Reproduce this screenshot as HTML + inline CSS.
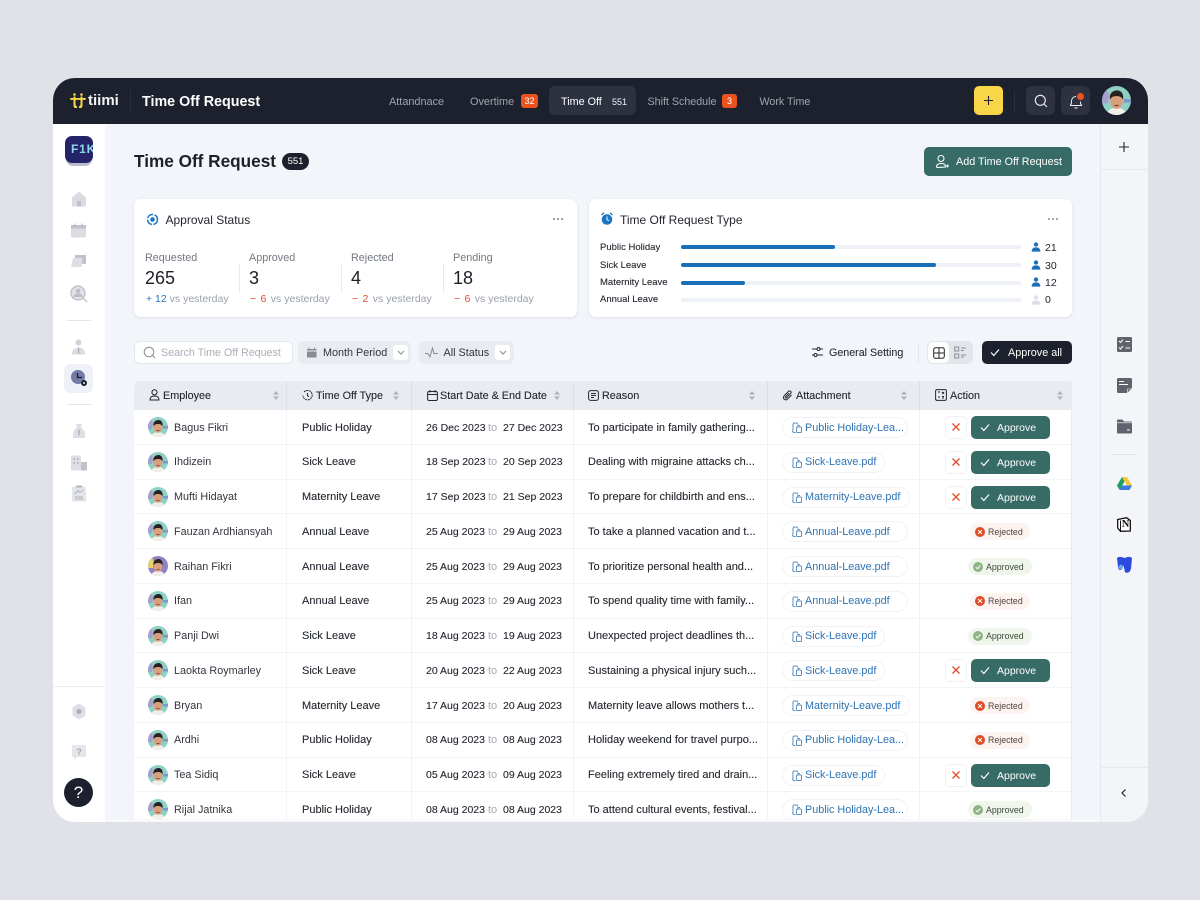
<!DOCTYPE html>
<html lang="en"><head><meta charset="utf-8"><title>Time Off Request</title>
<style>
*{box-sizing:border-box;margin:0;padding:0}
html,body{width:1200px;height:900px;overflow:hidden;background:#e0e2e8;font-family:"Liberation Sans",sans-serif;color:#23262e}
.a{position:absolute}
.ic{opacity:.78}
.t{position:absolute;white-space:nowrap;line-height:14px;height:14px}
.m{-webkit-text-stroke:.1px currentColor}
#frame{position:absolute;left:53px;top:78px;width:1095px;height:744px;border-radius:22px;overflow:hidden;background:#f2f5f9}
#stage{position:absolute;left:-53px;top:-78px;width:1200px;height:900px}
.card{position:absolute;background:#fff;border-radius:7px;box-shadow:0 1px 3px rgba(40,50,80,.1)}
.row{position:absolute;left:134px;width:938px;height:34.75px;background:#fff;border-bottom:1px solid #f2f4f7}
.row .t{font-size:11px;top:10.5px}
.row .n{left:40px;color:#33363e;font-size:10.8px}.ty{left:168px;color:#23262e}.row .d1{left:292px;font-size:10.5px}.to{left:354px;color:#a4aab5}.row .d2{left:369px;font-size:10.5px}.re{left:454px;width:170px;overflow:hidden}
.av{position:absolute;left:14px;top:7px;width:20px;height:20px}
.pill{position:absolute;left:648px;top:7px;height:21px;border:1px solid #f0f2f6;border-radius:11px}
.pill svg{position:absolute;left:8px;top:3px}
.pill span{position:absolute;left:22px;top:2.5px;line-height:14px;font-size:10.8px;color:#2d73b3;white-space:nowrap}
.x{position:absolute;left:811px;top:6px;width:22px;height:23px;border:1px solid #f0f1f4;border-radius:5px;background:#fff}
.ap{position:absolute;left:837px;top:6px;width:79px;height:23px;background:#376b66;border-radius:5px;color:#fff}
.ap span{position:absolute;left:26px;top:5px;font-size:10.5px;line-height:14px}
.ap svg{position:absolute;left:9px;top:7px}
.st{position:absolute;top:9px;height:17px;border-radius:9px}
.st span{position:absolute;left:18px;top:2.5px;font-size:8.8px;line-height:13px;white-space:nowrap}
.rej{left:836px;width:60px;background:#fdf4f1;color:#54403c}
.app{width:64px;background:#f0f6ec;color:#3b4a38;left:834px}
.st i{position:absolute;left:5px;top:3.5px;width:10px;height:10px;border-radius:50%}
.rej i{background:#e04a25}.app i{background:#8cb484}
.st i svg{position:absolute;left:0;top:0}
.th{position:absolute;top:381px;height:29px;background:#e8ebf0;border-right:1px solid #dde1e7}
.th .t{font-size:10.8px;top:7.5px;color:#23262e}
.th svg{position:absolute}
.sort{position:absolute;top:10px;width:6px;height:9px}
.mn{word-spacing:1.5px;margin-right:1.5px}
</style></head><body>
<svg width="0" height="0" style="position:absolute"><defs>
<clipPath id="c"><circle cx="10" cy="10" r="10"/></clipPath>
<symbol id="av" viewBox="0 0 20 20"><g clip-path="url(#c)"><rect width="20" height="20" fill="#8fd0c6"/><path d="M0 5 3 2l2 4-1 6H0z" fill="#a79fce"/><path d="M15 9h5v2.500h-5z" fill="#7f96c8"/><path d="M3 20c1-4 4-5 7-5s6 1 7 5z" fill="#f3efe8"/><ellipse cx="10" cy="10.500" rx="4.300" ry="5.300" fill="#d8a07c"/><path d="M5.500 9.500C4.800 4.500 8 3 10.500 3 13.500 3 15.200 6 14.500 9.500 13.800 7.500 12 7 10 7 8 7 6.300 7.500 5.500 9.500z" fill="#28211f"/><path d="M8.500 13h3v.9h-3z" fill="#7d3f35"/></g></symbol>
<symbol id="av2" viewBox="0 0 20 20"><g clip-path="url(#c)"><rect width="20" height="20" fill="#8f82c4"/><path d="M0 5 4 1l2 5-1 6H0z" fill="#e7cf73"/><path d="M3 20c1-4 4-5 7-5s6 1 7 5z" fill="#f3efe8"/><ellipse cx="10" cy="10.500" rx="4.300" ry="5.300" fill="#d8a07c"/><path d="M5.500 9.500C4.800 4.500 8 3 10.500 3 13.500 3 15.200 6 14.500 9.500 13.800 7.500 12 7 10 7 8 7 6.300 7.500 5.500 9.500z" fill="#28211f"/><path d="M8.500 13h3v.9h-3z" fill="#7d3f35"/></g></symbol>
<symbol id="clip" viewBox="0 0 12 13"><path d="M2 9.500V3.500A1.500 1.500 0 0 1 3.500 2H6l1 1.500M1.500 9.500c0 1.200.8 2 2 2h1" fill="none" stroke="#5c8fc2" stroke-width="1"/><rect x="5.500" y="6" width="5" height="5.500" rx="1" fill="none" stroke="#5c8fc2"/><path d="M7 6V4.500h2" fill="none" stroke="#5c8fc2"/></symbol>
<symbol id="ck" viewBox="0 0 10 9"><path d="M1 4.500 3.800 7.500 9 1.500" fill="none" stroke="#fff" stroke-width="1.200"/></symbol>
<symbol id="xx" viewBox="0 0 10 10"><path d="M1.500 1.500l7 7M8.500 1.500l-7 7" fill="none" stroke="#df4f2d" stroke-width="1.300"/></symbol>
<symbol id="srt" viewBox="0 0 6 9"><path d="M3 0 6 3.500H0zM3 9 0 5.500h6z" fill="#adb3bd"/></symbol>
<symbol id="pr" viewBox="0 0 12 12"><circle cx="6" cy="3" r="2.600"/><path d="M.8 11.500c0-3.500 2-5 5.200-5s5.200 1.500 5.200 5z"/></symbol>
</defs></svg>

<div id="frame"><div id="stage">
<!-- main -->
<div class="a" style="left:105px;top:124px;width:995px;height:694px;background:#f2f5f9"></div>

<!-- title -->
<div class="t" style="left:134px;top:151px;height:20px;line-height:20px;font-size:17.200px;font-weight:700;color:#1d2028">Time Off Request</div>
<div class="a" style="left:282px;top:153px;width:27px;height:17px;border-radius:9px;background:#1c212d;color:#fff;font-size:9.500px;line-height:17px;text-align:center">551</div>
<div class="a" style="left:924px;top:147px;width:148px;height:29px;border-radius:5px;background:#376b66"></div>
<svg class="a" style="left:935px;top:154px" width="15" height="15" viewBox="0 0 15 15" fill="none" stroke="#fff" stroke-width="1.100"><circle cx="6" cy="4.500" r="3"/><path d="M2 13.500c-1-1.500 0-4 4-4s4.500 1.500 4.500 3.500zM11 12h3M12.500 10.500v3"/></svg>
<div class="t" style="left:956px;top:154.500px;font-size:10.800px;color:#fff">Add Time Off Request</div>

<!-- approval card -->
<div class="card" style="left:134px;top:199px;width:443px;height:118px"></div>
<svg class="a" style="left:146px;top:213px" width="13" height="13" viewBox="0 0 13 13"><circle cx="6.500" cy="6.500" r="5" fill="none" stroke="#1a76c0" stroke-width="1.500" stroke-dasharray="7 1.500"/><circle cx="6.500" cy="6.500" r="2.300" fill="#1a76c0"/></svg>
<div class="t" style="left:165.500px;top:212.500px;font-size:12px;color:#23262e">Approval Status</div>
<svg class="a" style="left:552px;top:217px" width="12" height="4"><circle cx="2" cy="2" r="1" fill="#7d828c"/><circle cx="6" cy="2" r="1" fill="#7d828c"/><circle cx="10" cy="2" r="1" fill="#7d828c"/></svg>

<div class="t" style="left:145px;top:251px;font-size:10.800px;color:#737882">Requested</div>
<div class="t" style="left:145px;top:269px;height:18px;line-height:18px;font-size:18px;color:#1c1f26">265</div>
<div class="t" style="left:146px;top:292px;font-size:10.500px;color:#9aa0aa"><span style="color:#2676bb">+ 12</span> vs yesterday</div>
<div class="a" style="left:239px;top:264px;width:1px;height:28px;background:#e6e9ee"></div>
<div class="t" style="left:249px;top:251px;font-size:10.800px;color:#737882">Approved</div>
<div class="t" style="left:249px;top:269px;height:18px;line-height:18px;font-size:18px;color:#1c1f26">3</div>
<div class="t" style="left:250px;top:292px;font-size:10.500px;color:#9aa0aa"><span class="mn" style="color:#de4c2c">− 6</span> vs yesterday</div>
<div class="a" style="left:341px;top:264px;width:1px;height:28px;background:#e6e9ee"></div>
<div class="t" style="left:351px;top:251px;font-size:10.800px;color:#737882">Rejected</div>
<div class="t" style="left:351px;top:269px;height:18px;line-height:18px;font-size:18px;color:#1c1f26">4</div>
<div class="t" style="left:352px;top:292px;font-size:10.500px;color:#9aa0aa"><span class="mn" style="color:#de4c2c">− 2</span> vs yesterday</div>
<div class="a" style="left:443px;top:264px;width:1px;height:28px;background:#e6e9ee"></div>
<div class="t" style="left:453px;top:251px;font-size:10.800px;color:#737882">Pending</div>
<div class="t" style="left:453px;top:269px;height:18px;line-height:18px;font-size:18px;color:#1c1f26">18</div>
<div class="t" style="left:454px;top:292px;font-size:10.500px;color:#9aa0aa"><span class="mn" style="color:#de4c2c">− 6</span> vs yesterday</div>

<!-- type card -->
<div class="card" style="left:589px;top:199px;width:483px;height:118px"></div>
<svg class="a" style="left:601px;top:212px" width="12" height="14" viewBox="0 0 12 14"><circle cx="6" cy="7.500" r="5.300" fill="#1a76c0"/><path d="M6 4.500v3.200l2 1" stroke="#fff" fill="none"/><path d="M.5 3 3 .8M11.500 3 9 .8" stroke="#1a76c0" stroke-width="1.300"/></svg>
<div class="t" style="left:620px;top:212.500px;font-size:12px;color:#23262e">Time Off Request Type</div>
<svg class="a" style="left:1047px;top:217px" width="12" height="4"><circle cx="2" cy="2" r="1" fill="#8a8f98"/><circle cx="6" cy="2" r="1" fill="#8a8f98"/><circle cx="10" cy="2" r="1" fill="#8a8f98"/></svg>

<div class="t m" style="left:600px;top:241px;font-size:9.500px">Public Holiday</div>
<div class="a" style="left:681px;top:245px;width:340px;height:4px;border-radius:2px;background:#eef1f6"></div>
<div class="a" style="left:681px;top:245px;width:154px;height:4px;border-radius:2px;background:#1a6fb8"></div>
<svg class="a" style="left:1031px;top:242px;fill:#1a6fb8" width="10" height="10"><use href="#pr"/></svg>
<div class="t" style="left:1045px;top:241px;font-size:10.500px">21</div>

<div class="t m" style="left:600px;top:259px;font-size:9.500px">Sick Leave</div>
<div class="a" style="left:681px;top:263px;width:340px;height:4px;border-radius:2px;background:#eef1f6"></div>
<div class="a" style="left:681px;top:263px;width:255px;height:4px;border-radius:2px;background:#1a6fb8"></div>
<svg class="a" style="left:1031px;top:260px;fill:#1a6fb8" width="10" height="10"><use href="#pr"/></svg>
<div class="t" style="left:1045px;top:259px;font-size:10.500px">30</div>

<div class="t m" style="left:600px;top:276px;font-size:9.500px">Maternity Leave</div>
<div class="a" style="left:681px;top:280.500px;width:340px;height:4px;border-radius:2px;background:#eef1f6"></div>
<div class="a" style="left:681px;top:280.500px;width:64px;height:4px;border-radius:2px;background:#1a6fb8"></div>
<svg class="a" style="left:1031px;top:277px;fill:#1a6fb8" width="10" height="10"><use href="#pr"/></svg>
<div class="t" style="left:1045px;top:276px;font-size:10.500px">12</div>

<div class="t m" style="left:600px;top:293px;font-size:9.500px">Annual Leave</div>
<div class="a" style="left:681px;top:297.500px;width:340px;height:4px;border-radius:2px;background:#eef1f6"></div>
<svg class="a" style="left:1031px;top:295px;fill:#dcdfe5" width="10" height="10"><use href="#pr"/></svg>
<div class="t" style="left:1045px;top:293px;font-size:10.500px">0</div>

<!-- toolbar -->
<div class="a" style="left:134px;top:341px;width:159px;height:23px;background:#fff;border:1px solid #e4e7ec;border-radius:6px"></div>
<svg class="a" style="left:143px;top:346px" width="13" height="13" viewBox="0 0 13 13" fill="none" stroke="#858a94"><circle cx="6" cy="6" r="4.800"/><path d="M9.500 9.500 12 12"/></svg>
<div class="t" style="left:161px;top:346px;font-size:10.700px;color:#a9aeb8">Search Time Off Request</div>
<div class="a" style="left:298px;top:341px;width:113px;height:23px;background:#e8ebf0;border-radius:6px"></div>
<svg class="a" style="left:306px;top:347px" width="11" height="11" viewBox="0 0 11 11"><path d="M1 2h9.500v8.500H1z" fill="#868b95"/><path d="M1 4h9.500" stroke="#e8ebf0"/><path d="M3 .5v2M8.500.5v2" stroke="#868b95"/></svg>
<div class="t" style="left:323px;top:346px;font-size:10.800px;color:#33363e">Month Period</div>
<div class="a" style="left:393px;top:345px;width:15px;height:15px;border-radius:3px;background:#fff"></div>
<svg class="a" style="left:397px;top:350px" width="8" height="5"><path d="M1 1l3 3 3-3" fill="none" stroke="#868b95"/></svg>
<div class="a" style="left:419px;top:341px;width:95px;height:23px;background:#e8ebf0;border-radius:6px"></div>
<svg class="a" style="left:425px;top:346px" width="13" height="13" viewBox="0 0 13 13"><path d="M0 7.500h3L5 11l2.500-9 1.500 5.500h4" fill="none" stroke="#868b95"/></svg>
<div class="t" style="left:443.500px;top:346px;font-size:10.800px;color:#33363e">All Status</div>
<div class="a" style="left:495px;top:345px;width:15px;height:15px;border-radius:3px;background:#fff"></div>
<svg class="a" style="left:499px;top:350px" width="8" height="5"><path d="M1 1l3 3 3-3" fill="none" stroke="#868b95"/></svg>

<svg class="a" style="left:812px;top:346px" width="11" height="12" viewBox="0 0 11 12" fill="none" stroke="#23262e"><path d="M0 3h5M8 3h3M0 9h2M5 9h6"/><circle cx="6.500" cy="3" r="1.500"/><circle cx="3.500" cy="9" r="1.500"/></svg>
<div class="t m" style="left:829px;top:346px;font-size:10.700px;color:#2a2d35">General Setting</div>
<div class="a" style="left:918px;top:342px;width:1px;height:21px;background:#e5e8ed"></div>
<div class="a" style="left:927px;top:341px;width:46px;height:23px;background:#e2e5ea;border-radius:6px"></div>
<div class="a" style="left:928px;top:342px;width:21px;height:21px;background:#fff;border-radius:5px"></div>
<svg class="a" style="left:933px;top:347px" width="12" height="12" viewBox="0 0 12 12" fill="none" stroke="#23262e"><rect x=".7" y=".7" width="10.600" height="10.600" rx="2"/><path d="M6 .7v10.600M.7 6h10.600"/></svg>
<svg class="a" style="left:954px;top:346px" width="13" height="13" viewBox="0 0 13 13" fill="none" stroke="#8a8f98"><rect x=".7" y="1" width="4" height="4"/><rect x=".7" y="8" width="4" height="4"/><path d="M7 2h5M7 4.500h3M7 9h5M7 11h3"/></svg>
<div class="a" style="left:982px;top:341px;width:90px;height:23px;background:#1c212d;border-radius:5px"></div>
<svg class="a" style="left:990px;top:348px" width="10" height="9"><use href="#ck"/></svg>
<div class="t" style="left:1008px;top:346px;font-size:10.800px;color:#fff">Approve all</div>

<!-- table -->
<div class="a" style="left:134px;top:381px;width:938px;height:445px;background:#fff;border:1px solid #e6e9ee;border-radius:6px 6px 0 0"></div>
<div class="th" style="left:134px;width:153px;border-radius:6px 0 0 0"><svg style="left:15px;top:8px;" width="11" height="12" viewBox="0 0 11 12" fill="none" stroke="#23262e"><circle cx="5.500" cy="3.300" r="2.600"/><path d="M1 11c0-3 2-4 4.500-4s4.500 1 4.500 4z"/></svg><div class="t m" style="left:29px">Employee</div><svg class="sort" style="left:139px"><use href="#srt"/></svg></div>
<div class="th" style="left:287px;width:125px"><svg style="left:15px;top:9px" width="11" height="11" viewBox="0 0 11 11" fill="none" stroke="#23262e"><path d="M2 2a4.700 4.700 0 1 1-1.200 3.500" stroke-dasharray="2 .7"/><path d="M5.500 3v2.700l1.500 1"/></svg><div class="t m" style="left:29px">Time Off Type</div><svg class="sort" style="left:106px"><use href="#srt"/></svg></div>
<div class="th" style="left:412px;width:162px"><svg style="left:15px;top:9px" width="11" height="11" viewBox="0 0 11 11" fill="none" stroke="#23262e"><rect x=".6" y="1.500" width="9.800" height="9" rx="1.500"/><path d="M.6 4.500h9.800M3 0v2.500M8 0v2.500"/></svg><div class="t m" style="left:28px">Start Date &amp; End Date</div><svg class="sort" style="left:142px"><use href="#srt"/></svg></div>
<div class="th" style="left:574px;width:194px"><svg style="left:14px;top:9px" width="11" height="11" viewBox="0 0 11 11" fill="none" stroke="#23262e"><rect x=".6" y=".6" width="9.800" height="9.800" rx="2"/><path d="M3 3.500h5M3 5.500h5M3 7.500h3"/></svg><div class="t m" style="left:28px">Reason</div><svg class="sort" style="left:175px"><use href="#srt"/></svg></div>
<div class="th" style="left:768px;width:152px"><svg style="left:14px;top:9px" width="11" height="11" viewBox="0 0 11 11" fill="none" stroke="#23262e"><path d="M9.500 5 5.300 9.300C3 11 .2 8.300 2 6l4.600-4.700c1.500-1.200 3.300.6 2.200 2L4.500 7.800c-.7.700-1.700-.3-1-1L7 3.200"/></svg><div class="t m" style="left:28px">Attachment</div><svg class="sort" style="left:133px"><use href="#srt"/></svg></div>
<div class="th" style="left:920px;width:152px;border-right:0;border-radius:0 6px 0 0"><svg style="left:15px;top:8px" width="12" height="12" viewBox="0 0 12 12" fill="none" stroke="#23262e"><rect x=".6" y=".6" width="10.800" height="10.800" rx="1.500"/><path d="M3 3h2M7 3l2 2M9 3 7 5M3 8h2M7 7.500h2M7 9h2"/></svg><div class="t m" style="left:30px">Action</div><svg class="sort" style="left:137px"><use href="#srt"/></svg></div>

<div class="row" style="top:410px"><svg class="av"><use href="#av"/></svg><span class="t n">Bagus Fikri</span><span class="t ty m">Public Holiday</span><span class="t d1 m">26 Dec 2023</span><span class="t to">to</span><span class="t d2 m">27 Dec 2023</span><span class="t re m">To participate in family gathering...</span><div class="pill" style="width:126px"><svg width="12" height="13"><use href="#clip"/></svg><span>Public Holiday-Lea...</span></div><div class="x"><svg class="a" style="left:5px;top:5px" width="10" height="10"><use href="#xx"/></svg></div><div class="ap"><svg width="10" height="9"><use href="#ck"/></svg><span>Approve</span></div></div>

<div class="row" style="top:444.750px"><svg class="av"><use href="#av"/></svg><span class="t n">Ihdizein</span><span class="t ty m">Sick Leave</span><span class="t d1 m">18 Sep 2023</span><span class="t to">to</span><span class="t d2 m">20 Sep 2023</span><span class="t re m">Dealing with migraine attacks ch...</span><div class="pill" style="width:103px"><svg width="12" height="13"><use href="#clip"/></svg><span>Sick-Leave.pdf</span></div><div class="x"><svg class="a" style="left:5px;top:5px" width="10" height="10"><use href="#xx"/></svg></div><div class="ap"><svg width="10" height="9"><use href="#ck"/></svg><span>Approve</span></div></div>

<div class="row" style="top:479.500px"><svg class="av"><use href="#av"/></svg><span class="t n">Mufti Hidayat</span><span class="t ty m">Maternity Leave</span><span class="t d1 m">17 Sep 2023</span><span class="t to">to</span><span class="t d2 m">21 Sep 2023</span><span class="t re m">To prepare for childbirth and ens...</span><div class="pill" style="width:128px"><svg width="12" height="13"><use href="#clip"/></svg><span>Maternity-Leave.pdf</span></div><div class="x"><svg class="a" style="left:5px;top:5px" width="10" height="10"><use href="#xx"/></svg></div><div class="ap"><svg width="10" height="9"><use href="#ck"/></svg><span>Approve</span></div></div>

<div class="row" style="top:514.250px"><svg class="av"><use href="#av"/></svg><span class="t n">Fauzan Ardhiansyah</span><span class="t ty m">Annual Leave</span><span class="t d1 m">25 Aug 2023</span><span class="t to">to</span><span class="t d2 m">29 Aug 2023</span><span class="t re m">To take a planned vacation and t...</span><div class="pill" style="width:126px"><svg width="12" height="13"><use href="#clip"/></svg><span>Annual-Leave.pdf</span></div><div class="st rej"><i><svg width="10" height="10" viewBox="0 0 10 10"><path d="M3 3l4 4M7 3 3 7" stroke="#fff" fill="none"/></svg></i><span>Rejected</span></div></div>

<div class="row" style="top:549px"><svg class="av"><use href="#av2"/></svg><span class="t n">Raihan Fikri</span><span class="t ty m">Annual Leave</span><span class="t d1 m">25 Aug 2023</span><span class="t to">to</span><span class="t d2 m">29 Aug 2023</span><span class="t re m">To prioritize personal health and...</span><div class="pill" style="width:126px"><svg width="12" height="13"><use href="#clip"/></svg><span>Annual-Leave.pdf</span></div><div class="st app"><i><svg width="10" height="10" viewBox="0 0 10 10"><path d="M2.800 5.200 4.400 6.800 7.400 3.500" stroke="#fff" fill="none"/></svg></i><span>Approved</span></div></div>

<div class="row" style="top:583.750px"><svg class="av"><use href="#av"/></svg><span class="t n">Ifan</span><span class="t ty m">Annual Leave</span><span class="t d1 m">25 Aug 2023</span><span class="t to">to</span><span class="t d2 m">29 Aug 2023</span><span class="t re m">To spend quality time with family...</span><div class="pill" style="width:126px"><svg width="12" height="13"><use href="#clip"/></svg><span>Annual-Leave.pdf</span></div><div class="st rej"><i><svg width="10" height="10" viewBox="0 0 10 10"><path d="M3 3l4 4M7 3 3 7" stroke="#fff" fill="none"/></svg></i><span>Rejected</span></div></div>

<div class="row" style="top:618.500px"><svg class="av"><use href="#av"/></svg><span class="t n">Panji Dwi</span><span class="t ty m">Sick Leave</span><span class="t d1 m">18 Aug 2023</span><span class="t to">to</span><span class="t d2 m">19 Aug 2023</span><span class="t re m">Unexpected project deadlines th...</span><div class="pill" style="width:103px"><svg width="12" height="13"><use href="#clip"/></svg><span>Sick-Leave.pdf</span></div><div class="st app"><i><svg width="10" height="10" viewBox="0 0 10 10"><path d="M2.800 5.200 4.400 6.800 7.400 3.500" stroke="#fff" fill="none"/></svg></i><span>Approved</span></div></div>

<div class="row" style="top:653.250px"><svg class="av"><use href="#av"/></svg><span class="t n">Laokta Roymarley</span><span class="t ty m">Sick Leave</span><span class="t d1 m">20 Aug 2023</span><span class="t to">to</span><span class="t d2 m">22 Aug 2023</span><span class="t re m">Sustaining a physical injury such...</span><div class="pill" style="width:103px"><svg width="12" height="13"><use href="#clip"/></svg><span>Sick-Leave.pdf</span></div><div class="x"><svg class="a" style="left:5px;top:5px" width="10" height="10"><use href="#xx"/></svg></div><div class="ap"><svg width="10" height="9"><use href="#ck"/></svg><span>Approve</span></div></div>

<div class="row" style="top:688px"><svg class="av"><use href="#av"/></svg><span class="t n">Bryan</span><span class="t ty m">Maternity Leave</span><span class="t d1 m">17 Aug 2023</span><span class="t to">to</span><span class="t d2 m">20 Aug 2023</span><span class="t re m">Maternity leave allows mothers t...</span><div class="pill" style="width:128px"><svg width="12" height="13"><use href="#clip"/></svg><span>Maternity-Leave.pdf</span></div><div class="st rej"><i><svg width="10" height="10" viewBox="0 0 10 10"><path d="M3 3l4 4M7 3 3 7" stroke="#fff" fill="none"/></svg></i><span>Rejected</span></div></div>

<div class="row" style="top:722.750px"><svg class="av"><use href="#av"/></svg><span class="t n">Ardhi</span><span class="t ty m">Public Holiday</span><span class="t d1 m">08 Aug 2023</span><span class="t to">to</span><span class="t d2 m">08 Aug 2023</span><span class="t re m">Holiday weekend for travel purpo...</span><div class="pill" style="width:126px"><svg width="12" height="13"><use href="#clip"/></svg><span>Public Holiday-Lea...</span></div><div class="st rej"><i><svg width="10" height="10" viewBox="0 0 10 10"><path d="M3 3l4 4M7 3 3 7" stroke="#fff" fill="none"/></svg></i><span>Rejected</span></div></div>

<div class="row" style="top:757.500px"><svg class="av"><use href="#av"/></svg><span class="t n">Tea Sidiq</span><span class="t ty m">Sick Leave</span><span class="t d1 m">05 Aug 2023</span><span class="t to">to</span><span class="t d2 m">09 Aug 2023</span><span class="t re m">Feeling extremely tired and drain...</span><div class="pill" style="width:103px"><svg width="12" height="13"><use href="#clip"/></svg><span>Sick-Leave.pdf</span></div><div class="x"><svg class="a" style="left:5px;top:5px" width="10" height="10"><use href="#xx"/></svg></div><div class="ap"><svg width="10" height="9"><use href="#ck"/></svg><span>Approve</span></div></div>

<div class="row" style="top:792.250px"><svg class="av"><use href="#av"/></svg><span class="t n">Rijal Jatnika</span><span class="t ty m">Public Holiday</span><span class="t d1 m">08 Aug 2023</span><span class="t to">to</span><span class="t d2 m">08 Aug 2023</span><span class="t re m">To attend cultural events, festival...</span><div class="pill" style="width:126px"><svg width="12" height="13"><use href="#clip"/></svg><span>Public Holiday-Lea...</span></div><div class="st app"><i><svg width="10" height="10" viewBox="0 0 10 10"><path d="M2.800 5.200 4.400 6.800 7.400 3.500" stroke="#fff" fill="none"/></svg></i><span>Approved</span></div></div>

<!-- column dividers over rows -->
<div class="a" style="left:286px;top:410px;width:1px;height:410px;background:#f1f3f6"></div>
<div class="a" style="left:411px;top:410px;width:1px;height:410px;background:#f1f3f6"></div>
<div class="a" style="left:573px;top:410px;width:1px;height:410px;background:#f1f3f6"></div>
<div class="a" style="left:767px;top:410px;width:1px;height:410px;background:#f1f3f6"></div>
<div class="a" style="left:919px;top:410px;width:1px;height:410px;background:#f1f3f6"></div>
<div class="a" style="left:1071px;top:381px;width:1px;height:440px;background:#e6e9ee"></div>
<div class="a" style="left:105px;top:819px;width:995px;height:3px;background:#f7f8fa"></div>

<!-- sidebar -->
<div class="a" style="left:53px;top:124px;width:52px;height:698px;background:#fff"></div>
<div class="a" style="left:66px;top:140px;width:26px;height:26px;border-radius:7px;background:#b9bcc9"></div>
<div class="a" style="left:65px;top:136px;width:28px;height:27px;border-radius:7px;background:#25236a;overflow:hidden;color:#8fd6e6;font-size:12px;font-weight:700;line-height:27px;padding-left:6px;letter-spacing:.8px;white-space:nowrap">F1K</div>
<svg class="a ic" style="left:70px;top:190px" width="18" height="18" viewBox="0 0 18 18"><path d="M9 1.500 16 7.500V16.500H2V7.500z" fill="#d0d3da"/><rect x="7" y="11" width="4" height="5.500" fill="#aeb2bc"/></svg>
<svg class="a ic" style="left:71px;top:223px" width="15" height="15" viewBox="0 0 15 15"><rect y="2" width="15" height="12.500" rx="1.500" fill="#d0d3da"/><rect y="2" width="15" height="3.500" fill="#aeb2bc"/><path d="M4 .5v3M11 .5v3" stroke="#999eaa"/></svg>
<svg class="a ic" style="left:71px;top:254px" width="16" height="16" viewBox="0 0 16 16"><path d="M4 1h11v9H4z" fill="#aeb2bc"/><path d="M2 4h9v9H0z" fill="#d4d7dd"/></svg>
<svg class="a ic" style="left:70px;top:285px" width="18" height="18" viewBox="0 0 18 18"><circle cx="8" cy="8" r="7" fill="#d8dbe1" stroke="#a9adb8" stroke-width="1.300"/><circle cx="8" cy="6" r="2.300" fill="#a9adb8"/><path d="M3.500 12c.5-3 2.500-3.500 4.500-3.500s4 .5 4.500 3.500z" fill="#a9adb8"/><path d="M13 13l4 4" stroke="#a9adb8" stroke-width="1.400"/></svg>
<div class="a" style="left:67px;top:320px;width:24px;height:1px;background:#e3e5ea"></div>
<svg class="a ic" style="left:71px;top:339px" width="15" height="16" viewBox="0 0 15 16"><circle cx="7.500" cy="3.500" r="3" fill="#c3c6cf"/><path d="M1 15.500c0-5 2.500-7 6.500-7s6.500 2 6.500 7z" fill="#d0d3da"/><path d="M7 8.500h1.200v6H7z" fill="#8f94a0"/></svg>
<div class="a" style="left:64px;top:364px;width:29px;height:29px;border-radius:7px;background:#eef1f7"></div>
<svg class="a" style="left:70px;top:369px" width="18" height="18" viewBox="0 0 18 18"><circle cx="8" cy="8" r="7" fill="#737ba6"/><path d="M7.500 4v4.500H12" stroke="#1c212d" fill="none" stroke-width="1.300"/><circle cx="14" cy="14" r="3" fill="#1c212d"/><circle cx="14" cy="14" r="1" fill="#eef1f7"/></svg>
<div class="a" style="left:67px;top:404px;width:24px;height:1px;background:#e3e5ea"></div>
<svg class="a ic" style="left:72px;top:423px" width="14" height="16" viewBox="0 0 14 16"><path d="M4 1h6l-1 3 4 5v6H1V9l4-5z" fill="#d4d7dd"/><path d="M7 6.500v6" stroke="#9a9fab" stroke-width="1.500"/></svg>
<svg class="a ic" style="left:71px;top:455px" width="16" height="16" viewBox="0 0 16 16"><rect y=".5" width="10" height="15" fill="#d4d7dd"/><rect x="10" y="7" width="6" height="8.500" fill="#aeb2bc"/><path d="M2.500 3h1.500v2H2.500zM6 3h1.500v2H6zM2.500 7h1.500v2H2.500zM6 7h1.500v2H6z" fill="#9a9fab"/></svg>
<svg class="a ic" style="left:72px;top:485px" width="14" height="17" viewBox="0 0 14 17"><rect y="1.500" width="14" height="15" rx="1" fill="#dcdfe4"/><path d="M4 .5h6v2H4z" fill="#9a9fab"/><path d="M2.500 9 6 5.500l2 2L11.500 5M3 12h8M3 14h8" fill="none" stroke="#9a9fab"/></svg>
<div class="a" style="left:53px;top:686px;width:52px;height:1px;background:#eceef2"></div>
<svg class="a ic" style="left:71px;top:703px" width="16" height="17" viewBox="0 0 16 17"><path d="M8 .5 14.500 4.500v8L8 16.500 1.500 12.500v-8z" fill="#d4d7dd"/><circle cx="8" cy="8.500" r="2.500" fill="#8f95a8"/></svg>
<svg class="a ic" style="left:71px;top:744px" width="16" height="17" viewBox="0 0 16 17"><path d="M1 1h14v12H6l-3 3v-3H1z" fill="#dfe1e6"/></svg>
<div class="t" style="left:71px;top:745px;width:16px;text-align:center;font-size:9px;color:#a3a7b1;font-weight:700">?</div>
<div class="a" style="left:64px;top:778px;width:29px;height:29px;border-radius:50%;background:#1c212d;color:#fff;font-size:17px;line-height:29px;text-align:center">?</div>

<!-- right panel -->
<div class="a" style="left:1100px;top:124px;width:48px;height:698px;background:#f3f5f9;border-left:1px solid #e5e8ed"></div>
<svg class="a" style="left:1119px;top:142px" width="10" height="10"><path d="M5 0v10M0 5h10" stroke="#23262e" stroke-width="1.100"/></svg>
<div class="a" style="left:1101px;top:169px;width:47px;height:1px;background:#e7e9ee"></div>
<svg class="a" style="left:1117px;top:337px" width="15" height="15" viewBox="0 0 15 15"><rect width="15" height="15" rx="1.500" fill="#5f636d"/><path d="M2 4 3.500 5.500 6 2.500M2 10.500 3.500 12 6 9" stroke="#fff" fill="none"/><path d="M8.500 4.500h4.500M8.500 11h4.500" stroke="#fff"/></svg>
<svg class="a" style="left:1117px;top:378px" width="15" height="15" viewBox="0 0 15 15"><path d="M0 1.500A1.500 1.500 0 0 1 1.500 0h12A1.500 1.500 0 0 1 15 1.500V10l-5 5H1.500A1.500 1.500 0 0 1 0 13.500z" fill="#5f636d"/><path d="M2 3.500h5M2 6.500h9" stroke="#fff"/><path d="M10.500 11v4l4.500-4z" fill="#5f636d" stroke="#fff" stroke-width=".6"/></svg>
<svg class="a" style="left:1117px;top:419px" width="15" height="15" viewBox="0 0 15 15"><path d="M0 1.500C0 .8.500.5 1 .5h4.500L7 2.500h7c.6 0 1 .4 1 1V13.500c0 .6-.4 1-1 1H1c-.6 0-1-.4-1-1z" fill="#5f636d"/><path d="M0 3.800h15" stroke="#f3f5f9" stroke-width=".7"/><path d="M10 11h3" stroke="#fff"/></svg>
<div class="a" style="left:1112px;top:454px;width:25px;height:1px;background:#e1e4e9"></div>
<svg class="a" style="left:1117px;top:477px" width="15" height="14" viewBox="0 0 15 14"><path d="M5 0h5l5 8.500h-5z" fill="#f6c63b"/><path d="M5 0 0 8.500 2.500 13 7.500 4.500z" fill="#1c9f5c"/><path d="M2.500 13H12.500l2.500-4.500H5z" fill="#3d78e6"/></svg>
<svg class="a" style="left:1117px;top:517px" width="14" height="15" viewBox="0 0 14 15"><path d="M.7 2.500 9.500.7 13.300 3.500v10.500L3.500 14.300.7 11z" fill="#fff" stroke="#111" stroke-width="1.300"/><path d="M3.500 3.500V14.300" stroke="#111"/></svg>
<div class="t" style="left:1120px;top:518px;width:11px;text-align:center;font-family:'Liberation Serif',serif;font-weight:700;font-size:10.500px;color:#111">N</div>
<svg class="a" style="left:1117px;top:556px" width="15" height="18" viewBox="0 0 15 18"><path d="M0 2c2-2 5-1 7.500 0 2.500-1 5-2 7.500 0l-1 11c-1 3-3.500 5-6 3-.8-3-1-7-2-6-.5 2-1 4-3 4-2 0-2-4-3-12z" fill="#2c4bde"/><circle cx="4" cy="11" r="2.300" fill="#6ea7f0"/></svg>
<div class="a" style="left:1101px;top:767px;width:47px;height:1px;background:#e7e9ee"></div>
<svg class="a" style="left:1120px;top:788px" width="7" height="10"><path d="M5.500 1.500 2 5l3.500 3.500" fill="none" stroke="#23262e" stroke-width="1.200"/></svg>

<!-- header -->
<div class="a" style="left:53px;top:78px;width:1095px;height:46px;background:#1c212d"></div>
<svg class="a" style="left:70px;top:93px" width="16" height="16" viewBox="0 0 16 16"><g fill="#f7d746"><rect x="0" y="5" width="16" height="1.900" rx=".9"/><path d="M3.500 3.500h2V11q0 2 1.500 2.300V15H5.500q-2 0-2-3zM10.500 3.500h2V12q0 3-2 3H9v-1.700Q10.500 13 10.500 11z"/><circle cx="4.500" cy="1.500" r="1.300"/><circle cx="11.500" cy="1.500" r="1.300"/></g></svg>
<div class="t" style="left:88px;top:93px;height:16px;line-height:16px;font-size:15px;font-weight:700;color:#f3f3f3">tiimi</div>
<div class="a" style="left:130px;top:90px;width:1px;height:22px;background:#2b303c"></div>
<div class="t" style="left:142px;top:94px;height:16px;line-height:16px;font-size:14.300px;font-weight:700;color:#fff">Time Off Request</div>

<div class="t" style="left:389px;top:95px;font-size:10.900px;color:#a0a4ad">Attandnace</div>
<div class="t" style="left:470px;top:95px;font-size:10.900px;color:#a0a4ad">Overtime</div>
<div class="a" style="left:521px;top:94px;width:17px;height:14px;border-radius:3px;background:#ea5320;color:#fff;font-size:9px;line-height:14px;text-align:center">32</div>
<div class="a" style="left:549px;top:86px;width:87px;height:29px;border-radius:6px;background:#2d3240"></div>
<div class="t" style="left:561px;top:95px;font-size:10.800px;color:#fff">Time Off</div>
<div class="t" style="left:612px;top:95px;font-size:9px;color:#f0f0f0">551</div>
<div class="t" style="left:647.500px;top:95px;font-size:10.700px;color:#a0a4ad">Shift Schedule</div>
<div class="a" style="left:722px;top:94px;width:15px;height:14px;border-radius:3px;background:#ea5320;color:#fff;font-size:9px;line-height:14px;text-align:center">3</div>
<div class="t" style="left:759.500px;top:95px;font-size:10.700px;color:#a0a4ad">Work Time</div>

<div class="a" style="left:974px;top:86px;width:29px;height:29px;border-radius:5px;background:#f9d648"></div>
<svg class="a" style="left:984px;top:96px" width="9" height="9"><path d="M4.500 0v9M0 4.500h9" stroke="#1c212d" stroke-width="1.100"/></svg>
<div class="a" style="left:1014px;top:90px;width:1px;height:21px;background:#2c313d"></div>
<div class="a" style="left:1026px;top:86px;width:29px;height:29px;border-radius:6px;background:#2d3140"></div>
<svg class="a" style="left:1034px;top:94px" width="14" height="14" viewBox="0 0 14 14" fill="none" stroke="#f0f0f0" stroke-width="1.100"><circle cx="6.300" cy="6.300" r="5"/><path d="M10 10l3 3"/></svg>
<div class="a" style="left:1061px;top:86px;width:29px;height:29px;border-radius:6px;background:#2d3140"></div>
<svg class="a" style="left:1069px;top:94px" width="14" height="15" viewBox="0 0 14 15" fill="none" stroke="#f0f0f0"><path d="M1 11.500c1.500-1 1.500-2.500 1.500-4.500 0-2.500 2-4.500 4.500-4.500"/><path d="M1 11.500h12M5.500 13.500c.5.800 2.500.8 3 0"/><path d="M11.500 7.500c0 2 0 3 1.500 4"/></svg>
<div class="a" style="left:1077px;top:93px;width:6.500px;height:6.500px;border-radius:50%;background:#ea5320"></div>
<svg class="a" style="left:1101.500px;top:86px" width="29" height="29"><use href="#av"/></svg>
</div></div>
</body></html>
